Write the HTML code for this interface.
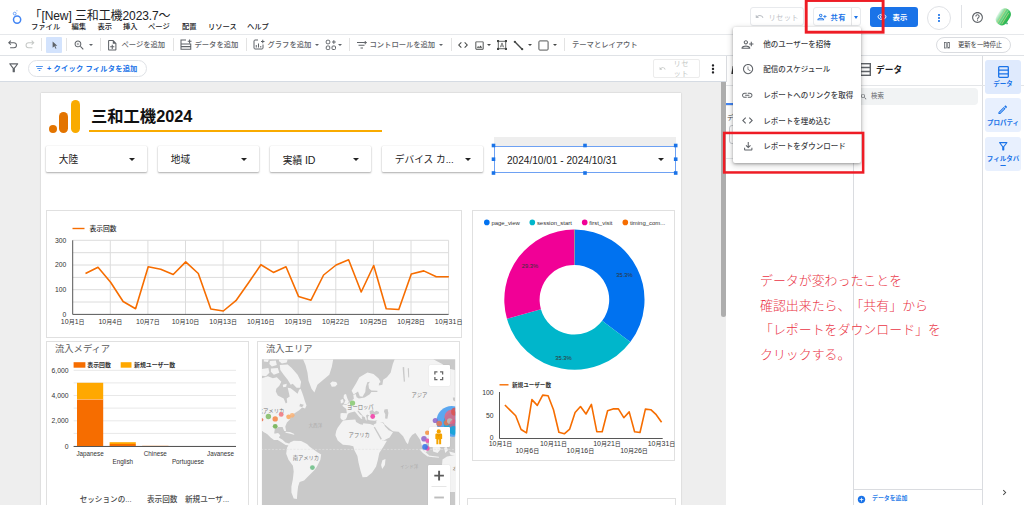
<!DOCTYPE html>
<html lang="ja">
<head>
<meta charset="utf-8">
<title>Looker Studio</title>
<style>
*{box-sizing:border-box;margin:0;padding:0}
html,body{width:1024px;height:505px;overflow:hidden;background:#fff}
body{position:relative;font-family:"Liberation Sans","Noto Sans CJK JP",sans-serif;color:#3c4043;font-size:9px}
.abs{position:absolute}
.t{position:absolute;white-space:nowrap;line-height:1}
svg{position:absolute;overflow:visible}
#canvas{left:0;top:82px;width:726px;height:423px;background:#eeeeee}
#page{left:41px;top:93px;width:640px;height:412px;background:#fff;box-shadow:0 0 1.5px rgba(0,0,0,.22)}
.hl{position:absolute;height:1px;background:#dadce0}
.vl{position:absolute;width:1px;background:#dadce0}
.dd{position:absolute;top:146px;width:101px;height:26px;background:#fff;box-shadow:0 1px 2px rgba(0,0,0,.32),0 0 1px rgba(0,0,0,.18);border-radius:1px}
.dd span{position:absolute;left:12.8px;top:9.2px;font-size:9.7px;color:#222;line-height:1;white-space:nowrap}
.dd i{position:absolute;right:12px;top:11.8px;border:3.2px solid transparent;border-top:3.4px solid #222;border-bottom:0}
.box{position:absolute;border:1px solid #e0e0e0;background:#fff}
.menu{font-size:7.3px;color:#202124;top:22.9px;font-weight:500}
.tb{font-size:7.3px;color:#5f6368;top:40.7px;font-weight:500}
.mi{font-size:7.5px;color:#3c4043;left:763.3px;font-weight:500}
.tab{position:absolute;left:985px;width:36px;height:34px;background:#e8f0fe;border-radius:3px}
.tab span{position:absolute;left:0;width:36px;text-align:center;font-size:6.5px;font-weight:700;color:#1a73e8;line-height:1.1;white-space:nowrap}
.ax{font-size:7px;fill:#333;font-family:"Liberation Sans","Noto Sans CJK JP",sans-serif}
</style>
</head>
<body>
<!-- ===== header ===== -->
<div id="hdr" class="abs" style="left:0;top:0;width:1024px;height:34px;background:#fff"></div>
<!-- ===== toolbar ===== -->
<div class="hl" style="left:0;top:33.5px;width:1024px;background:#e6e8eb"></div>
<div class="hl" style="left:0;top:55px;width:1024px;background:#dfe2e6"></div>
<!-- ===== filter bar ===== -->
<div class="hl" style="left:0;top:81px;width:726px;background:#d5dbe3"></div>
<!-- ===== canvas ===== -->
<div id="canvas" class="abs"></div>
<div id="page" class="abs"></div>
<!-- scrollbar -->
<div class="abs" style="left:721px;top:82px;width:5px;height:234.5px;background:#adadad;border-radius:0 0 2.5px 2.5px"></div>
<!-- ===== right panels ===== -->
<div class="abs" style="left:726px;top:56px;width:298px;height:449px;background:#fff"></div>
<div class="vl" style="left:726px;top:56px;height:26px"></div>
<div class="vl" style="left:853px;top:56px;height:449px"></div>
<div class="vl" style="left:981.5px;top:56px;height:449px"></div>

<!-- ===== header content ===== -->
<svg style="left:0;top:0" width="40" height="34"><circle cx="17.100" cy="19.550" r="3.600" fill="none" stroke="#4285f4" stroke-width="1.500"/><circle cx="14.700" cy="13.600" r="1.400" fill="none" stroke="#5e97f6" stroke-width=".9"/><circle cx="16.900" cy="10.800" r=".7" fill="#a8c7fa"/></svg>
<div class="t" style="left:29.600px;top:9.900px;font-size:12px;color:#202124;letter-spacing:-.1px">「[New] 三和工機2023.7〜</div>
<div class="t menu" style="left:31px">ファイル</div>
<div class="t menu" style="left:71.5px">編集</div>
<div class="t menu" style="left:97.5px">表示</div>
<div class="t menu" style="left:123px">挿入</div>
<div class="t menu" style="left:148px">ページ</div>
<div class="t menu" style="left:182px">配置</div>
<div class="t menu" style="left:208px">リソース</div>
<div class="t menu" style="left:247px">ヘルプ</div>

<!-- reset button (header) -->
<div class="abs" style="left:750.3px;top:7.3px;width:54px;height:19.2px;border:1px solid #e8eaed;border-radius:3px"></div>
<svg style="left:755px;top:12px" width="9" height="9" viewBox="0 0 24 24"><path fill="#bdc1c6" d="M12.5 8c-2.65 0-5.05.99-6.9 2.6L2 7v9h9l-3.62-3.62c1.39-1.16 3.16-1.88 5.12-1.88 3.54 0 6.55 2.31 7.6 5.5l2.37-.78C21.08 11.03 17.15 8 12.5 8z"/></svg>
<div class="t" style="left:768.500px;top:13.500px;font-size:7.3px;color:#bdc1c6;letter-spacing:.3px">リセット</div>
<!-- share button -->
<div class="abs" style="left:813.2px;top:7.3px;width:48px;height:19.2px;border:1px solid #e8eaed;border-radius:3px;background:#fff"></div>
<div class="vl" style="left:851px;top:8px;height:18px;background:#e4e5e7"></div>
<svg style="left:817px;top:11.5px" width="10" height="10" viewBox="0 0 24 24"><path fill="#1a73e8" d="M13 8c0-2.21-1.79-4-4-4S5 5.790 5 8s1.790 4 4 4 4-1.790 4-4zm-2 0c0 1.100-.9 2-2 2s-2-.9-2-2 .9-2 2-2 2 .9 2 2zM1 18v2h16v-2c0-2.660-5.330-4-8-4s-8 1.340-8 4zm2 0c.2-.71 3.300-2 6-2 2.690 0 5.780 1.280 6 2H3zm17-3v-3h3v-2h-3V7h-2v3h-3v2h3v3h2z"/></svg>
<div class="t" style="left:830.5px;top:13.700px;font-size:7.3px;color:#1a73e8;font-weight:700;letter-spacing:.4px">共有</div>
<div class="abs" style="left:853.5px;top:16px;border:2.6px solid transparent;border-top:3px solid #1a73e8;border-bottom:0"></div>
<!-- view button -->
<div class="abs" style="left:870px;top:7px;width:48px;height:19.5px;background:#1a73e8;border-radius:3px"></div>
<svg style="left:876.5px;top:12px" width="10" height="10" viewBox="0 0 24 24"><path fill="#fff" d="M12 6c3.790 0 7.170 2.130 8.820 5.500C19.170 14.870 15.790 17 12 17s-7.170-2.130-8.820-5.500C4.830 8.130 8.210 6 12 6m0-2C7 4 2.730 7.110 1 11.500 2.730 15.890 7 19 12 19s9.270-3.110 11-7.500C21.270 7.110 17 4 12 4zm0 5c1.380 0 2.500 1.120 2.500 2.500S13.380 14 12 14s-2.500-1.120-2.500-2.500S10.620 9 12 9m0-2c-2.480 0-4.500 2.020-4.500 4.500S9.520 16 12 16s4.500-2.020 4.500-4.500S14.480 7 12 7z"/></svg>
<div class="t" style="left:892.500px;top:13.500px;font-size:7.3px;color:#fff;font-weight:700;letter-spacing:.3px">表示</div>
<!-- more -->
<div class="abs" style="left:927px;top:5.5px;width:24px;height:24px;border:1px solid #e0e2e6;border-radius:50%"></div>
<svg style="left:933px;top:11.5px" width="12" height="12" viewBox="0 0 24 24"><path fill="#1a73e8" d="M12 8c1.100 0 2-.9 2-2s-.9-2-2-2-2 .9-2 2 .9 2 2 2zm0 2c-1.100 0-2 .9-2 2s.9 2 2 2 2-.9 2-2-.9-2-2-2zm0 6c-1.100 0-2 .9-2 2s.9 2 2 2 2-.9 2-2-.9-2-2-2z"/></svg>
<div class="vl" style="left:960.5px;top:5px;height:23px;background:#e0e2e6"></div>
<svg style="left:970.700px;top:10.500px" width="13" height="13" viewBox="0 0 24 24"><path fill="#5f6368" d="M11 18h2v-2h-2v2zm1-16C6.480 2 2 6.480 2 12s4.480 10 10 10 10-4.480 10-10S17.520 2 12 2zm0 18c-4.410 0-8-3.590-8-8s3.590-8 8-8 8 3.590 8 8-3.590 8-8 8zm0-14c-2.210 0-4 1.790-4 4h2c0-1.100.9-2 2-2s2 .9 2 2c0 2-3 1.750-3 5h2c0-2.250 3-2.500 3-5 0-2.210-1.790-4-4-4z"/></svg>
<!-- avatar -->
<svg style="left:0;top:0" width="1024" height="36"><defs><linearGradient id="lg" x1="0" y1="0" x2="1" y2="0"><stop offset="0" stop-color="#e4f8e9"/><stop offset=".3" stop-color="#7fdb9a"/><stop offset=".7" stop-color="#3cc463"/><stop offset="1" stop-color="#25b14a"/></linearGradient></defs><g transform="translate(1003.300,16.800) rotate(32)"><rect x="-6" y="-8.800" width="12" height="17.600" rx="5.500" fill="url(#lg)"/><path d="M-1.800,-8.500V8.500M2.600,-6V7" stroke="#d7d28a" stroke-width=".7" fill="none" opacity=".9"/><path d="M.6,-8V8" stroke="#b9e6a6" stroke-width=".5" fill="none"/></g><circle cx="1007" cy="23.400" r=".9" fill="#3fae7a"/></svg>

<!-- ===== toolbar content ===== -->
<svg style="left:8px;top:40.300px" width="9.500" height="9.500" viewBox="0 0 20 20"><path fill="none" stroke="#5f6368" stroke-width="2.200" d="M6,1.200L1.600,5.600L6,10M1.600,5.600H12.500A5.300,5.300 0 0 1 12.500,16.200H4.500"/></svg>
<svg style="left:25px;top:40.300px" width="9.500" height="9.500" viewBox="0 0 20 20"><path fill="none" stroke="#c4c7c5" stroke-width="2.200" d="M14,1.200L18.400,5.600L14,10M18.400,5.600H7.500A5.300,5.300 0 0 0 7.500,16.200H15.500"/></svg>
<div class="vl" style="left:41px;top:38px;height:13px;background:#e3e3e3"></div>
<div class="abs" style="left:46.200px;top:36.900px;width:15.800px;height:15.800px;background:#d3e3fd;border-radius:1px"></div>
<svg style="left:50.800px;top:41px" width="7.800" height="7.800" viewBox="0 0 24 24"><path fill="#5f6368" d="M5 1.500l14.500 12.800-6.400.6 3.700 7.900-2.700 1.200-3.600-8L5 20.500z"/></svg>
<div class="vl" style="left:66px;top:38px;height:13px;background:#e3e3e3"></div>
<svg style="left:73px;top:38.500px" width="12.500" height="12.500" viewBox="0 0 24 24"><path fill="#5f6368" d="M15.500 14h-.79l-.28-.27C15.410 12.590 16 11.110 16 9.500 16 5.910 13.090 3 9.500 3S3 5.910 3 9.500 5.910 16 9.500 16c1.610 0 3.090-.59 4.230-1.570l.27.28v.79l5 4.990L20.490 19l-4.990-5zm-6 0C7.010 14 5 11.990 5 9.500S7.010 5 9.500 5 14 7.010 14 9.500 11.990 14 9.500 14zm2.500-4h-2v2H9v-2H7V9h2V7h1v2h2v1z"/></svg>
<i class="abs" style="left:88.500px;top:44px;border:2.300px solid transparent;border-top:2.600px solid #5f6368;border-bottom:0"></i>
<div class="vl" style="left:100px;top:38px;height:13px;background:#e3e3e3"></div>
<svg style="left:106.200px;top:38.500px" width="12.500" height="12.500" viewBox="0 0 24 24"><path fill="#5f6368" d="M13 11h-2v3H8v2h3v3h2v-3h3v-2h-3zm1-9H6c-1.100 0-2 .9-2 2v16c0 1.100.89 2 1.990 2H18c1.100 0 2-.9 2-2V8l-6-6zm4 18H6V4h7v5h5v11z"/></svg>
<div class="t tb" style="left:121.500px">ページを追加</div>
<div class="vl" style="left:173px;top:38px;height:13px;background:#e3e3e3"></div>
<svg style="left:179.500px;top:39px" width="12" height="11" viewBox="0 0 24 22"><path fill="none" stroke="#5f6368" stroke-width="2.100" d="M12 2H2v18.500h19.500V10H2M2 15.200h19.500M15.500 4.500h7.500M19.200 .8v7.500"/></svg>
<div class="t tb" style="left:194.500px">データを追加</div>
<div class="vl" style="left:246px;top:38px;height:13px;background:#e3e3e3"></div>
<svg style="left:253px;top:39px" width="12" height="11" viewBox="0 0 24 22"><path fill="none" stroke="#5f6368" stroke-width="2" d="M10 2H4c-1.100 0-2 .9-2 2v14c0 1.100.9 2 2 2h14c1.100 0 2-.9 2-2v-7M6.500 17v-5M11 17V9M15.500 17v-3M16 5h7M19.500 1.500v7"/></svg>
<div class="t tb" style="left:267.500px">グラフを追加</div>
<i class="abs" style="left:314.500px;top:44px;border:2.300px solid transparent;border-top:2.600px solid #5f6368;border-bottom:0"></i>
<svg style="left:325px;top:39px" width="12" height="12" viewBox="0 0 24 24"><g fill="none" stroke="#5f6368" stroke-width="2"><rect x="2.500" y="2.500" width="7" height="7" rx="2"/><rect x="2.500" y="14" width="7" height="7" rx="2"/><rect x="14" y="14" width="7" height="7" rx="2"/><path d="M14 6h7.500M17.700 2.300v7.500"/></g></svg>
<i class="abs" style="left:338px;top:44px;border:2.300px solid transparent;border-top:2.600px solid #5f6368;border-bottom:0"></i>
<div class="vl" style="left:348.500px;top:38px;height:13px;background:#e3e3e3"></div>
<svg style="left:355.500px;top:39.500px" width="12" height="11" viewBox="0 0 24 22"><path fill="none" stroke="#5f6368" stroke-width="2" d="M2 5h15M5 10.500h12M9 16h5M11.500 20h0M18.500 2v6.500M15.300 5.200h6.500"/></svg>
<div class="t tb" style="left:369.500px">コントロールを追加</div>
<i class="abs" style="left:439px;top:44px;border:2.300px solid transparent;border-top:2.600px solid #5f6368;border-bottom:0"></i>
<div class="vl" style="left:450.500px;top:38px;height:13px;background:#e3e3e3"></div>
<svg style="left:457px;top:39px" width="12" height="12" viewBox="0 0 24 24"><path fill="#444746" d="M9.400 16.600L4.800 12l4.600-4.600L8 6l-6 6 6 6 1.400-1.400zm5.200 0l4.600-4.600-4.600-4.600L16 6l6 6-6 6-1.400-1.400z"/></svg>
<svg style="left:474px;top:39.500px" width="11" height="11" viewBox="0 0 24 24"><path fill="#444746" d="M19 5v14H5V5h14m0-2H5c-1.100 0-2 .9-2 2v14c0 1.100.9 2 2 2h14c1.100 0 2-.9 2-2V5c0-1.100-.9-2-2-2zm-4.860 8.860l-3 3.870L9 13.140 6 17h12l-3.860-5.140z"/></svg>
<i class="abs" style="left:486.500px;top:44px;border:2.300px solid transparent;border-top:2.600px solid #444746;border-bottom:0"></i>
<svg style="left:496.500px;top:40px" width="10" height="10" viewBox="0 0 24 24"><g fill="none" stroke="#444746" stroke-width="2"><rect x="3" y="3" width="18" height="18"/><path d="M8 17.500L12 7l4 10.500M9.300 14.500h5.400" stroke-width="1.600"/></g><g fill="#444746"><rect x="0" y="0" width="5" height="5"/><rect x="19" y="0" width="5" height="5"/><rect x="0" y="19" width="5" height="5"/><rect x="19" y="19" width="5" height="5"/></g></svg>
<svg style="left:513px;top:39.500px" width="11" height="11" viewBox="0 0 24 24"><path stroke="#444746" stroke-width="3" d="M4 4l16 16"/><circle cx="4" cy="4" r="2.500" fill="#444746"/><circle cx="20" cy="20" r="2.500" fill="#444746"/></svg>
<i class="abs" style="left:528px;top:44px;border:2.300px solid transparent;border-top:2.600px solid #444746;border-bottom:0"></i>
<svg style="left:537.500px;top:39.500px" width="11" height="11" viewBox="0 0 24 24"><rect x="2" y="2" width="20" height="20" rx="2" fill="none" stroke="#444746" stroke-width="2"/></svg>
<i class="abs" style="left:552.500px;top:44px;border:2.300px solid transparent;border-top:2.600px solid #444746;border-bottom:0"></i>
<div class="vl" style="left:563.500px;top:38px;height:13px;background:#e3e3e3"></div>
<div class="t tb" style="left:572px;color:#5f6368">テーマとレイアウト</div>
<!-- pause updates pill -->
<div class="abs" style="left:935.500px;top:36.500px;width:75.500px;height:16.500px;border:1px solid #dadce0;border-radius:9px;background:#fff"></div>
<svg style="left:944px;top:41.500px" width="6" height="6.500" viewBox="0 0 12 13"><g fill="none" stroke="#5f6368" stroke-width="1.500"><rect x="1" y="1" width="3.500" height="11"/><rect x="7.500" y="1" width="3.500" height="11"/></g></svg>
<div class="t" style="left:958px;top:41.500px;font-size:6.300px;color:#3c4043;font-weight:400">更新を一時停止</div>

<!-- ===== filter bar content ===== -->
<svg style="left:6.700px;top:60.800px" width="13.500" height="13.500" viewBox="0 0 24 24"><path fill="#5f6368" d="M7 6h10l-5.010 6.300L7 6zm-2.750-.39C6.270 8.200 10 13 10 13v6c0 .55.45 1 1 1h2c.55 0 1-.45 1-1v-6s3.720-4.800 5.740-7.390c.51-.66.040-1.610-.79-1.610H5.040c-.83 0-1.300.95-.79 1.610z"/></svg>
<div class="abs" style="left:28px;top:59.500px;width:118.500px;height:17px;border:1px solid #dfe2e6;border-radius:9px;background:#fff"></div>
<svg style="left:34.500px;top:64px" width="9" height="9" viewBox="0 0 24 24"><path fill="#1a73e8" d="M10 18h4v-2h-4v2zM3 6v2h18V6H3zm3 7h12v-2H6v2z"/></svg>
<div class="t" style="left:47px;top:64.500px;font-size:7.300px;color:#1a73e8;font-weight:700;letter-spacing:.15px">+ クイック フィルタを追加</div>
<!-- reset (filter bar) -->
<div class="abs" style="left:652.500px;top:59px;width:47px;height:18.500px;border:1px solid #ececec;border-radius:2px"></div>
<svg style="left:658.500px;top:65px" width="7" height="7" viewBox="0 0 24 24"><path fill="#c4c7c5" d="M12.500 8c-2.650 0-5.050.99-6.900 2.600L2 7v9h9l-3.620-3.620c1.390-1.160 3.160-1.880 5.120-1.880 3.540 0 6.550 2.310 7.600 5.500l2.370-.78C21.080 11.030 17.150 8 12.500 8z"/></svg>
<div class="t" style="left:673.500px;top:59.300px;font-size:7.300px;color:#c4c7c5;line-height:1.300;letter-spacing:.5px;text-align:center">リセ<br>ット</div>
<svg style="left:705.500px;top:61.500px" width="14" height="14" viewBox="0 0 24 24"><path fill="#202124" d="M12 8c1.100 0 2-.9 2-2s-.9-2-2-2-2 .9-2 2 .9 2 2 2zm0 2c-1.100 0-2 .9-2 2s.9 2 2 2 2-.9 2-2-.9-2-2-2zm0 6c-1.100 0-2 .9-2 2s.9 2 2 2 2-.9 2-2-.9-2-2-2z"/></svg>

<!-- ===== report page content ===== -->
<div class="abs" style="left:49px;top:125px;width:8px;height:8px;border-radius:50%;background:#e37400"></div>
<div class="abs" style="left:59.300px;top:112px;width:9px;height:21px;border-radius:5px;background:#e37400"></div>
<div class="abs" style="left:71px;top:99.500px;width:8.700px;height:33.500px;border-radius:5px;background:#f9ab00"></div>
<div class="t" style="left:91px;top:108px;font-size:16.300px;font-weight:700;color:#111;letter-spacing:0">三和工機2024</div>
<div class="abs" style="left:88.500px;top:130px;width:293.500px;height:2px;background:#f9ab00"></div>
<div class="dd" style="left:46px"><span>大陸</span><i></i></div>
<div class="dd" style="left:158px"><span>地域</span><i></i></div>
<div class="dd" style="left:270px"><span>実績 <b style="font-weight:400;font-size:10.6px">ID</b></span><i></i></div>
<div class="dd" style="left:382px"><span>デバイス カ...</span><i></i></div>
<!-- date range (selected) -->
<div class="abs" style="left:493.500px;top:137px;width:182px;height:9px;background:#eeeeee"></div>
<div class="abs" style="left:493.500px;top:145.500px;width:182.300px;height:27.500px;border:1px solid #6ea1f3;background:#fff"></div>
<div class="t" style="left:507px;top:155.600px;font-size:10.100px;color:#222">2024/10/01 - 2024/10/31</div>
<i class="abs" style="left:657.500px;top:158px;border:3px solid transparent;border-top:3.300px solid #222;border-bottom:0"></i>
<svg style="left:0;top:0" width="1024" height="505"><g fill="#1a73e8"><rect x="491.700" y="143.700" width="3.600" height="3.600"/><rect x="583.200" y="143.700" width="3.600" height="3.600"/><rect x="673.900" y="143.700" width="3.600" height="3.600"/><rect x="491.700" y="157.400" width="3.600" height="3.600"/><rect x="673.900" y="157.400" width="3.600" height="3.600"/><rect x="491.700" y="171.200" width="3.600" height="3.600"/><rect x="583.200" y="171.200" width="3.600" height="3.600"/><rect x="673.900" y="171.200" width="3.600" height="3.600"/></g></svg>

<!-- ===== chart 1: line ===== -->
<div class="box" style="left:45.5px;top:210px;width:416px;height:127.7px"></div>
<svg style="left:0;top:0" width="1024" height="505">
<path d="M72.7,240.3H448.6M72.7,252.7H448.6M72.7,265.0H448.6M72.7,277.4H448.6M72.7,289.7H448.6M72.7,302.0H448.6M110.3,240.3V314.4M147.9,240.3V314.4M185.5,240.3V314.4M223.1,240.3V314.4M260.7,240.3V314.4M298.2,240.3V314.4M335.8,240.3V314.4M373.4,240.3V314.4M411.0,240.3V314.4M448.6,240.3V314.4" stroke="#dcdcdc" stroke-width="1" fill="none"/>
<path d="M72.7,240.3V314.4H448.6" stroke="#444" stroke-width=".9" fill="none"/>
<polyline points="85.5,273.5 98.0,267.3 110.6,282.2 123.1,301.5 135.6,308.7 148.2,266.8 160.7,269.3 173.2,274.5 185.7,261.9 198.3,273.5 210.8,309.0 223.3,311.0 235.9,300.7 248.4,283.0 260.9,264.7 273.4,272.4 286.0,266.8 298.5,296.4 311.0,300.2 323.6,275.0 336.1,265.0 348.6,259.8 361.2,292.0 373.7,265.5 386.2,308.7 398.8,309.5 411.3,274.0 423.8,270.9 436.3,276.8 448.9,276.8" fill="none" stroke="#f66d00" stroke-width="1.6" stroke-linejoin="round"/>
<path d="M72.5,228.5H84.5" stroke="#f66d00" stroke-width="1.4"/>
<text x="89.4" y="231" class="ax" style="font-size:6.8px;font-weight:500" fill="#222">表示回数</text>
<text x="66.3" y="242.7" text-anchor="end" class="ax" style="font-size:6.8px">300</text>
<text x="66.3" y="267.4" text-anchor="end" class="ax" style="font-size:6.8px">200</text>
<text x="66.3" y="292.1" text-anchor="end" class="ax" style="font-size:6.8px">100</text>
<text x="66.3" y="316.8" text-anchor="end" class="ax" style="font-size:6.8px">0</text>
<text x="72.7" y="324" text-anchor="middle" class="ax" style="font-size:6px"><tspan font-size="7">10</tspan>月<tspan font-size="7">1</tspan>日</text>
<text x="110.3" y="324" text-anchor="middle" class="ax" style="font-size:6px"><tspan font-size="7">10</tspan>月<tspan font-size="7">4</tspan>日</text>
<text x="147.9" y="324" text-anchor="middle" class="ax" style="font-size:6px"><tspan font-size="7">10</tspan>月<tspan font-size="7">7</tspan>日</text>
<text x="185.5" y="324" text-anchor="middle" class="ax" style="font-size:6px"><tspan font-size="7">10</tspan>月<tspan font-size="7">10</tspan>日</text>
<text x="223.1" y="324" text-anchor="middle" class="ax" style="font-size:6px"><tspan font-size="7">10</tspan>月<tspan font-size="7">13</tspan>日</text>
<text x="260.7" y="324" text-anchor="middle" class="ax" style="font-size:6px"><tspan font-size="7">10</tspan>月<tspan font-size="7">16</tspan>日</text>
<text x="298.2" y="324" text-anchor="middle" class="ax" style="font-size:6px"><tspan font-size="7">10</tspan>月<tspan font-size="7">19</tspan>日</text>
<text x="335.8" y="324" text-anchor="middle" class="ax" style="font-size:6px"><tspan font-size="7">10</tspan>月<tspan font-size="7">22</tspan>日</text>
<text x="373.4" y="324" text-anchor="middle" class="ax" style="font-size:6px"><tspan font-size="7">10</tspan>月<tspan font-size="7">25</tspan>日</text>
<text x="411.0" y="324" text-anchor="middle" class="ax" style="font-size:6px"><tspan font-size="7">10</tspan>月<tspan font-size="7">28</tspan>日</text>
<text x="448.6" y="324" text-anchor="middle" class="ax" style="font-size:6px"><tspan font-size="7">10</tspan>月<tspan font-size="7">31</tspan>日</text>
</svg>

<!-- ===== chart 2: donut + small line ===== -->
<div class="box" style="left:472px;top:210px;width:203px;height:250.5px"></div>
<svg style="left:0;top:0" width="1024" height="505">
<path d="M574.40,229.60A70.1,70.1 0 0 1 630.33,341.97L602.16,320.68A34.8,34.8 0 0 0 574.40,264.90Z" fill="#0072f0"/>
<path d="M630.33,341.97A70.1,70.1 0 0 1 506.96,318.83L540.92,309.20A34.8,34.8 0 0 0 602.16,320.68Z" fill="#00b6cb"/>
<path d="M506.96,318.83A70.1,70.1 0 0 1 573.96,229.60L574.18,264.90A34.8,34.8 0 0 0 540.92,309.20Z" fill="#f10096"/>
<path d="M573.96,229.60A70.1,70.1 0 0 1 574.40,229.60L574.40,264.90A34.8,34.8 0 0 0 574.18,264.90Z" fill="#f66d00"/>
<text x="624.5" y="276.7" text-anchor="middle" class="ax" style="font-size:5.8px" fill="#1a1a1a">35.3%</text>
<text x="563.5" y="359.7" text-anchor="middle" class="ax" style="font-size:5.8px" fill="#1a1a1a">35.3%</text>
<text x="530.0" y="268.4" text-anchor="middle" class="ax" style="font-size:5.8px" fill="#1a1a1a">29.3%</text>
<circle cx="486.8" cy="222.4" r="2.8" fill="#0072f0"/>
<text x="491.4" y="224.5" class="ax" style="font-size:5.95px" fill="#222">page_view</text>
<circle cx="532.3" cy="222.4" r="2.8" fill="#00b6cb"/>
<text x="536.9" y="224.5" class="ax" style="font-size:5.95px" fill="#222">session_start</text>
<circle cx="584.7" cy="222.4" r="2.8" fill="#f10096"/>
<text x="589.3" y="224.5" class="ax" style="font-size:5.95px" fill="#222">first_visit</text>
<circle cx="625.3" cy="222.4" r="2.8" fill="#f66d00"/>
<text x="629.9" y="224.5" class="ax" style="font-size:5.95px" fill="#222">timing_com...</text>
<path d="M499.5,392V438.5H662.7" stroke="#444" stroke-width=".9" fill="none"/>
<polyline points="504.9,405.0 510.3,410.4 515.7,415.8 521.1,429.5 526.5,432.9 531.9,399.6 537.3,405.4 542.7,395.1 548.1,395.8 553.5,409.7 558.9,432.3 564.3,433.8 569.7,429.1 575.1,412.5 580.5,406.5 586.0,414.0 591.4,404.4 596.8,431.7 602.2,431.7 607.6,410.8 613.0,408.9 618.4,408.9 623.8,417.7 629.2,411.9 634.6,431.7 640.0,432.5 645.4,409.1 650.8,409.7 656.2,414.7 661.6,422.2" fill="none" stroke="#f66d00" stroke-width="1.6" stroke-linejoin="round"/>
<path d="M499.5,384.8H508.5" stroke="#f66d00" stroke-width="1.4"/>
<text x="512" y="387" class="ax" style="font-size:5.6px;font-weight:700" fill="#222">新規ユーザー数</text>
<text x="493.5" y="394.7" text-anchor="end" class="ax" style="font-size:6.8px">100</text>
<text x="493.5" y="417.8" text-anchor="end" class="ax" style="font-size:6.8px">50</text>
<text x="493.5" y="440.4" text-anchor="end" class="ax" style="font-size:6.8px">0</text>
<text x="500.5" y="445.6" text-anchor="middle" class="ax" style="font-size:6px"><tspan font-size="7">10</tspan>月<tspan font-size="7">1</tspan>日</text>
<text x="553.5" y="445.6" text-anchor="middle" class="ax" style="font-size:6px"><tspan font-size="7">10</tspan>月<tspan font-size="7">11</tspan>日</text>
<text x="607.0" y="445.6" text-anchor="middle" class="ax" style="font-size:6px"><tspan font-size="7">10</tspan>月<tspan font-size="7">21</tspan>日</text>
<text x="661.5" y="445.6" text-anchor="middle" class="ax" style="font-size:6px"><tspan font-size="7">10</tspan>月<tspan font-size="7">31</tspan>日</text>
<text x="527.3" y="453" text-anchor="middle" class="ax" style="font-size:6px"><tspan font-size="7">10</tspan>月<tspan font-size="7">6</tspan>日</text>
<text x="580.4" y="453" text-anchor="middle" class="ax" style="font-size:6px"><tspan font-size="7">10</tspan>月<tspan font-size="7">16</tspan>日</text>
<text x="634.0" y="453" text-anchor="middle" class="ax" style="font-size:6px"><tspan font-size="7">10</tspan>月<tspan font-size="7">26</tspan>日</text>
</svg>
<div class="box" style="left:467px;top:498px;width:208.500px;height:20px"></div>

<!-- ===== chart 3: bar ===== -->
<div class="box" style="left:45.5px;top:341px;width:203.5px;height:180px"></div>
<div class="t" style="left:55px;top:344.7px;font-size:9.3px;color:#5a5a5a;font-weight:400">流入メディア</div>
<svg style="left:0;top:0" width="1024" height="505">
<path d="M73.6,446.0H236M73.6,433.4H236M73.6,420.8H236M73.6,408.1H236M73.6,395.5H236M73.6,382.9H236M73.6,370.3H236" stroke="#e8e8e8" stroke-width="1" fill="none"/>
<rect x="77" y="399.300" width="26.2" height="46.700" fill="#f66d00"/>
<rect x="77" y="382.8" width="26.2" height="16.2" fill="#ffa800"/><rect x="77" y="399" width="26.2" height=".7" fill="#ffc070"/><rect x="142.2" y="445.500" width="26.200" height=".8" fill="#f66d00" fill-opacity=".35"/>
<rect x="109.6" y="444" width="26.2" height="2" fill="#f66d00"/>
<rect x="109.6" y="442.2" width="26.2" height="1.8" fill="#ffa800"/>
<path d="M73.6,446.5H236" stroke="#444" stroke-width=".9"/>
<rect x="73.6" y="362.2" width="11.8" height="5.5" fill="#f66d00"/>
<text x="87.3" y="367" class="ax" style="font-size:5.9px;font-weight:700" fill="#222">表示回数</text>
<rect x="120.7" y="362.2" width="10.8" height="5.5" fill="#ffa800"/>
<text x="134" y="367" class="ax" style="font-size:5.9px;font-weight:700" fill="#222">新規ユーザー数</text>
<text x="68.6" y="372.5" text-anchor="end" class="ax" style="font-size:6.8px">6,000</text>
<text x="68.6" y="397.7" text-anchor="end" class="ax" style="font-size:6.8px">4,000</text>
<text x="68.6" y="423.0" text-anchor="end" class="ax" style="font-size:6.8px">2,000</text>
<text x="68.6" y="449.4" text-anchor="end" class="ax" style="font-size:6.8px">0</text>
<text x="90.1" y="455.6" text-anchor="middle" class="ax" style="font-size:6.3px">Japanese</text>
<text x="122.8" y="464.2" text-anchor="middle" class="ax" style="font-size:6.3px">English</text>
<text x="155.3" y="455.6" text-anchor="middle" class="ax" style="font-size:6.3px">Chinese</text>
<text x="188.0" y="464.2" text-anchor="middle" class="ax" style="font-size:6.3px">Portuguese</text>
<text x="220.5" y="455.6" text-anchor="middle" class="ax" style="font-size:6.3px">Javanese</text>
</svg>
<div class="t" style="left:79.7px;top:495.500px;font-size:7.6px;color:#4a4a4a;font-weight:500">セッションの...</div>
<div class="t" style="left:147px;top:495.500px;font-size:7.6px;color:#4a4a4a;font-weight:500">表示回数</div>
<div class="t" style="left:185px;top:495.500px;font-size:7.6px;color:#4a4a4a;font-weight:500">新規ユーザ...</div>

<!-- ===== chart 4: map ===== -->
<div class="box" style="left:257px;top:341px;width:202.500px;height:180px"></div>
<div class="t" style="left:266px;top:344.700px;font-size:9.300px;color:#5a5a5a;font-weight:400">流入エリア</div>
<svg style="left:0;top:0" width="1024" height="505">
<defs><clipPath id="mapclip"><rect x="261.900" y="359.200" width="193.300" height="146"/></clipPath></defs>
<g clip-path="url(#mapclip)">
<rect x="261" y="359" width="195" height="147" fill="#c9c9c9"/>
<g fill="#f3f3f3">
<path d="M262.0,378.3L267.9,376.3L272.9,378.3L276.8,377.3L281.3,381.7L279.3,385.7L276.3,388.7L275.8,391.6L277.8,395.6L283.7,398.6L285.7,403.5L287.2,402.5L286.7,398.6L289.7,396.6L287.7,387.7L290.7,388.2L293.6,390.6L297.6,393.8L299.1,389.7L300.6,388.7L302.1,392.6L303.5,396.6L305.0,401.5L306.5,405.5L305.1,408.5L302.1,407.5L299.2,410.2L295.0,413.1L291.3,415.9L289.6,419.8L286.9,422.6L285.3,426.5L286.1,431.1L284.2,431.1L282.6,427.0L278.2,427.0L274.8,429.0L274.2,433.2L276.2,437.1L279.0,440.0L274.0,440.0L270.6,437.4L266.4,433.2L261.7,429.9Z"/>
<path d="M279.8,364.9L287.7,364.4L291.7,367.9L297.6,374.8L301.1,381.7L300.1,387.7L296.6,387.7L292.7,383.7L290.7,384.7L287.7,379.8L283.7,374.8L280.3,369.9Z"/>
<path d="M269.9,360.9L275.8,360.4L276.8,364.9L271.9,366.4L269.4,363.9Z"/>
<path d="M262.0,368.9L268.4,367.9L269.4,372.8L265.9,376.3L262.0,375.8Z"/>
<path d="M270.9,368.4L277.8,367.9L279.3,372.8L273.8,374.8L270.9,371.8Z"/>
<path d="M279.3,359.2L287.7,359.2L286.7,362.4L281.8,363.4L278.8,360.9Z"/>
<path d="M263.9,359.2L268.9,359.2L267.9,361.9L263.9,361.4Z"/>
<path d="M282.8,384.7L286.7,383.7L286.2,386.7L283.2,387.2Z"/>
<path d="M303.0,359.2L333.2,359.2L331.8,366.9L329.3,374.8L323.3,379.8L317.4,384.7L314.4,392.4L311.5,388.7L308.5,380.7L307.5,372.8L305.5,364.9Z"/>
<path d="M330.1,383.2L332.3,381.5L336.2,381.9L337.4,384.2L335.2,386.5L331.8,386.7Z"/>
<path d="M261.0,430.0L272.1,430.0L274.3,433.7L278.1,433.0L280.3,435.2L278.8,437.4L282.5,439.7L285.5,442.6L289.9,443.7L289.5,445.5L285.5,444.9L281.8,442.6L277.3,439.7L272.9,436.7L268.4,434.5L263.9,432.2Z"/>
<path d="M285.5,431.8L289.9,432.1L294.4,433.9L294.0,434.8L289.2,433.6L285.5,432.7Z"/>
<path d="M289.9,442.6L293.7,440.7L301.1,441.1L307.0,444.1L310.0,447.1L317.4,452.3L321.2,454.5L320.4,459.7L316.7,467.1L314.5,470.1L310.0,474.6L307.0,477.5L304.1,480.5L299.6,482.0L298.1,486.5L297.4,492.4L296.9,499.1L293.7,498.4L291.4,492.4L291.4,486.5L292.9,479.0L293.7,471.6L292.9,465.7L288.5,459.7L286.2,453.8L287.0,447.8Z"/>
<path d="M343.1,420.5L348.2,419.9L355.3,419.5L356.1,421.9L360.1,424.3L362.9,424.7L363.2,423.2L370.0,423.9L374.0,425.6L376.1,429.1L379.3,435.3L382.4,440.5L386.9,440.7L383.4,446.8L379.3,453.0L377.8,460.3L376.1,466.5L372.0,472.8L366.8,476.9L362.6,477.3L360.5,470.7L358.5,462.4L357.4,456.1L354.3,449.9L353.3,446.2L349.1,445.3L342.9,444.7L337.7,440.5L335.4,435.3L336.2,431.0L337.5,428.0L339.1,425.8L341.1,423.1Z"/>
<path d="M382.4,460.3L385.5,459.0L384.9,464.9L382.2,469.0L381.1,464.9Z"/>
<path d="M373.7,424.4L377.3,422.7L382.5,422.7L385.1,425.3L389.6,430.4L393.0,432.3L389.6,437.5L383.1,440.8L380.9,439.4L377.3,433.0L374.5,427.8Z"/>
<path d="M340.4,417.9L340.5,413.6L341.9,413.1L346.8,413.2L346.3,409.0L342.2,405.8L343.5,404.6L346.0,404.9L348.5,403.6L351.8,400.5L353.9,398.8L353.3,395.1L355.7,393.9L356.6,397.3L358.9,398.5L364.6,397.5L369.8,394.2L371.3,392.1L377.4,392.0L377.4,390.7L371.4,390.4L369.0,388.4L368.4,384.1L369.9,381.7L367.3,382.3L365.8,386.9L365.3,392.1L362.5,396.8L359.8,396.3L358.0,391.6L353.6,394.5L351.6,390.7L355.7,384.0L359.4,377.3L367.5,372.5L373.5,374.0L378.7,378.5L380.6,382.0L379.1,383.2L378.8,385.6L382.4,384.7L383.2,379.7L386.9,377.3L390.6,372.8L392.8,363.9L394.6,359.5L394.7,359.2L433.3,359.2L442.2,363.9L448.2,368.4L454.8,369.9L454.8,395.1L455.0,397.6L453.1,400.1L455.0,401.4L455.0,433.6L450.5,437.5L441.5,437.5L433.8,433.6L434.4,438.8L432.5,442.6L429.3,441.3L427.3,438.1L426.0,441.3L426.7,446.5L427.3,451.0L425.4,452.3L423.2,449.1L421.5,444.5L420.2,440.0L417.7,436.2L415.4,433.0L415.3,433.0L412.1,434.9L409.5,438.8L407.9,444.2L406.3,442.6L403.1,436.2L398.6,431.7L392.8,431.3L389.6,428.7L385.1,424.9L383.1,422.3L376.3,423.8L376.3,421.0L377.5,420.2L374.3,420.7L369.6,420.2L367.8,419.4L368.0,416.6L369.6,415.4L367.2,414.6L366.0,415.8L366.8,418.6L366.6,420.7L365.5,419.4L364.8,417.0L363.7,416.7L361.3,414.0L358.5,410.8L357.3,410.8L357.7,411.6L360.1,414.4L362.9,416.3L361.7,416.7L362.3,418.5L361.3,419.1L358.5,415.9L355.7,412.4L354.6,411.4L353.8,411.8L350.6,412.4L348.6,413.2L347.4,414.8L347.0,417.1L345.8,419.3L343.1,420.2L341.5,419.5Z"/>
<path d="M343.9,394.8L346.0,393.9L347.2,398.1L348.9,401.8L347.2,404.3L343.9,404.0L345.4,400.3L343.6,398.1Z"/>
<path d="M340.5,399.9L343.0,399.0L343.6,402.3L340.9,403.4Z"/>
<path d="M420.6,449.1L422.8,449.7L429.3,455.5L428.0,456.8L422.8,452.9L420.4,450.3Z"/>
<path d="M432.5,445.8L438.3,444.5L440.8,449.1L437.6,452.9L433.1,451.6Z"/>
<path d="M428.6,455.5L438.9,456.8L438.9,457.8L428.6,456.8Z"/>
<path d="M444.1,447.8L446.6,446.5L447.9,450.3L445.3,452.9Z"/>
<path d="M449.2,451.6L455.0,452.9L455.0,455.5L450.5,454.8Z"/>
<path d="M442.5,459.5L447.0,456.5L455.2,455.0L455.2,492.0L446.0,492.0L441.5,470.0Z"/>
</g>
<g fill="#c9c9c9">
<path d="M300.1,403.8L303.8,404.8L302.1,407.2L299.4,406.3Z"/>
<path d="M402.6,367.2L404.1,366.9L405.0,381.4L403.8,381.7Z"/>
<path d="M407.7,368.4L408.9,368.1L409.2,377.3L408.3,377.6Z"/>
<path d="M369.6,411.1L372.8,410.1L374.3,411.9L376.3,410.7L379.1,411.9L378.5,414.1L374.3,414.9L370.0,414.3Z"/>
<path d="M384.4,409.4L387.6,408.9L388.4,413.0L387.4,418.8L385.1,418.4L385.3,414.3L384.0,411.7Z"/>
<path d="M373.7,427.2L375.0,426.9L381.8,438.8L380.7,439.8Z"/>
<path d="M384.2,425.6L385.3,425.1L390.0,429.5L389.2,430.8Z"/>
<path d="M452.8,397.6L455.0,397.6L455.0,401.2L453.1,400.1Z"/>
</g>
<path d="M261,449.400H456" stroke="#e2e2e2" stroke-width=".6" stroke-dasharray="2.200 1.400" fill="none"/>
<g font-family="Liberation Sans,Noto Sans CJK JP,sans-serif" stroke="#f3f3f3" stroke-width=".5" paint-order="stroke" stroke-opacity=".5">
<text x="257.6" y="412.9" font-size="5.3" fill="#777" letter-spacing=".15">北アメリカ</text>
<text x="292.8" y="460.2" font-size="5.3" fill="#777" >南アメリカ</text>
<text x="347.1" y="409.1" font-size="5.3" fill="#777" >ヨーロッパ</text>
<text x="348.6" y="436.7" font-size="5.3" fill="#777" >アフリカ</text>
<text x="411.6" y="397.2" font-size="5.3" fill="#777" >アジア</text>
</g>
<g font-family="Liberation Sans,Noto Sans CJK JP,sans-serif">
<text x="308.5" y="426.6" font-size="4.6" fill="#aaa" >大西洋</text>
<text x="400.0" y="468.2" font-size="4.6" fill="#aaa" >インド洋</text>
<text x="452.5" y="470" font-size="4.6" fill="#777">オー</text>
</g>
<g>
<circle cx="451.8" cy="421.4" r="15.4" fill="#4a9ff0" fill-opacity="0.9"/>
<circle cx="454.4" cy="422.7" r="10.9" fill="#1fa9d4" fill-opacity="0.85"/>
<circle cx="451.5" cy="416.9" r="7.1" fill="#e56a86" fill-opacity="0.85"/>
<circle cx="455.0" cy="411.7" r="3.9" fill="#d9534f" fill-opacity="0.85"/>
<circle cx="446.6" cy="422.7" r="2.8" fill="#e8734f" fill-opacity="0.85"/>
<circle cx="449.8" cy="421.1" r="2.8" fill="#b9b9b9" fill-opacity="0.95"/>
<circle cx="454.4" cy="424.6" r="5.1" fill="#e25b7a" fill-opacity="0.7"/>
<circle cx="453.7" cy="430.4" r="4.5" fill="#1aa3d9" fill-opacity="0.9"/>
<circle cx="435.3" cy="420.5" r="2.6" fill="#8c63c9" fill-opacity="0.85"/>
<circle cx="439.2" cy="423.6" r="2.8" fill="#e0785a" fill-opacity="0.9"/>
<circle cx="427.3" cy="432.7" r="2.3" fill="#f79646" fill-opacity="0.9"/>
<circle cx="424.0" cy="438.8" r="2.8" fill="#8c63c9" fill-opacity="0.85"/>
<circle cx="427.6" cy="440.7" r="2.3" fill="#ee4fae" fill-opacity="0.85"/>
<circle cx="427.3" cy="448.4" r="2.3" fill="#ee3fa4" fill-opacity="0.85"/>
<circle cx="425.0" cy="446.9" r="2.8" fill="#3b78e7" fill-opacity="0.9"/>
<circle cx="268.4" cy="416.5" r="2.7" fill="#86bf6c" fill-opacity="0.9"/>
<circle cx="275.2" cy="418.9" r="2.7" fill="#f58a4b" fill-opacity="0.9"/>
<circle cx="281.2" cy="414.4" r="2.4" fill="#f07a82" fill-opacity="0.9"/>
<circle cx="275.2" cy="426.3" r="2.4" fill="#72b255" fill-opacity="0.9"/>
<circle cx="288.6" cy="416.8" r="2.4" fill="#f9a65a" fill-opacity="0.85"/>
<circle cx="292.2" cy="415.3" r="2.4" fill="#f9b275" fill-opacity="0.85"/>
<circle cx="261.6" cy="419.8" r="1.8" fill="#e8734f" fill-opacity="0.9"/>
<circle cx="352.5" cy="403.1" r="2.7" fill="#8ccb76" fill-opacity="0.9"/>
<circle cx="372.7" cy="416.5" r="2.4" fill="#f13fa7" fill-opacity="0.9"/>
<circle cx="312.4" cy="467.6" r="2.4" fill="#70c08a" fill-opacity="0.9"/>
</g>
</g>
</svg>
<div class="abs" style="left:428.500px;top:364.600px;width:21.200px;height:21.400px;background:#fff;border-radius:1px;box-shadow:0 0 1px rgba(0,0,0,.2)"></div>
<svg style="left:431.400px;top:367.600px" width="15.500" height="15.500" viewBox="0 0 24 24"><path fill="#666" d="M7 14H5v5h5v-2H7v-3zm-2-4h2V7h3V5H5v5zm12 7h-3v2h5v-5h-2v3zM14 5v2h3v3h2V5h-5z"/></svg>
<div class="abs" style="left:428.600px;top:426.900px;width:21px;height:20.600px;background:#fff;border-radius:1px;box-shadow:0 0 1px rgba(0,0,0,.2)"></div>
<svg style="left:434.300px;top:429px" width="9.500" height="16.500" viewBox="0 0 10 18"><circle cx="5" cy="2.600" r="2.300" fill="#f5a400"/><path d="M1.300,6.200 Q1.300,5 2.600,5 H7.400 Q8.700,5 8.700,6.200 V10.800 H7.600 V16.500 H5.400 V11.500 H4.600 V16.500 H2.400 V10.800 H1.300 Z" fill="#f5a400"/><path d="M3.300,5.200L5,8L6.700,5.200" stroke="#d98a00" stroke-width=".6" fill="none"/></svg>
<div class="abs" style="left:428.400px;top:464.700px;width:21.300px;height:42px;background:#fff;border-radius:1px;box-shadow:0 0 1px rgba(0,0,0,.2)"></div>
<svg style="left:0;top:0" width="1024" height="505"><path d="M434.300,475.600H443.900M439.100,470.800V480.400" stroke="#5a5a5a" stroke-width="1.900"/><path d="M431.500,486.500H446.500" stroke="#e6e6e6" stroke-width="1"/><path d="M434.300,497.500H443.900" stroke="#bdbdbd" stroke-width="1.900"/></svg>

<!-- ===== hidden properties panel (behind menu) ===== -->
<div class="hl" style="left:726px;top:84.500px;width:298px;background:#e3e5e8"></div>
<div class="abs" style="left:726px;top:103px;width:8px;height:2px;background:#4285f4"></div>
<div class="hl" style="left:726px;top:104.500px;width:127px;background:#e3e5e8"></div>
<div class="hl" style="left:726px;top:157.500px;width:127px;background:#e3e5e8"></div>
<div class="t" style="left:727px;top:114.500px;font-size:6.500px;color:#444">デ</div>
<div class="abs" style="left:729px;top:125px;width:60px;height:18.500px;border:1px solid #c9ccd1;border-radius:3px"></div>
<div class="abs" style="left:731.600px;top:66px;width:1.600px;height:8px;background:#333;transform:skewX(-10deg)"></div>
<!-- ===== data panel ===== -->
<svg style="left:860px;top:62.500px" width="11" height="13" viewBox="0 0 11 13"><g fill="none" stroke="#5f6368" stroke-width="1.400"><rect x=".7" y=".7" width="9.600" height="11.600"/><path d="M.7,4.500H10.300M.7,8.500H10.300"/></g></svg>
<div class="t" style="left:876px;top:65.800px;font-size:8.700px;font-weight:700;color:#202124">データ</div>
<div class="abs" style="left:855px;top:88px;width:123px;height:16.500px;background:#f1f3f4;border-radius:4px"></div>
<svg style="left:859.500px;top:92.500px" width="7.500" height="7.500" viewBox="0 0 24 24"><path fill="#5f6368" d="M15.500 14h-.79l-.28-.27C15.410 12.590 16 11.110 16 9.500 16 5.910 13.090 3 9.500 3S3 5.910 3 9.500 5.910 16 9.500 16c1.610 0 3.090-.59 4.230-1.570l.27.28v.79l5 4.990L20.490 19l-4.990-5zm-6 0C7.010 14 5 11.990 5 9.500S7.010 5 9.500 5 14 7.010 14 9.500 11.990 14 9.500 14z"/></svg>
<div class="t" style="left:871px;top:93.100px;font-size:6.400px;color:#5f6368">検索</div>
<div class="hl" style="left:853px;top:488.500px;width:129px"></div>
<svg style="left:857px;top:494.500px" width="9" height="9" viewBox="0 0 24 24"><path fill="#1a73e8" d="M12 2C6.480 2 2 6.480 2 12s4.480 10 10 10 10-4.480 10-10S17.520 2 12 2zm5 11h-4v4h-2v-4H7v-2h4V7h2v4h4v2z"/></svg>
<div class="t" style="left:872px;top:496px;font-size:5.900px;font-weight:700;color:#2b7de9">データを追加</div>
<!-- ===== side tabs ===== -->
<div class="tab" style="top:60px;background:#dfeafd"><span style="top:20.300px">データ</span></div>
<svg style="left:997.500px;top:65.800px" width="11" height="12" viewBox="0 0 11 12"><g fill="none" stroke="#1a73e8" stroke-width="1.300"><rect x=".7" y=".7" width="9.600" height="10.600" rx=".8"/><path d="M.7,4.200H10.300M.7,7.800H10.300"/></g></svg>
<div class="tab" style="top:98px"><span style="top:21.300px">プロパティ</span></div>
<svg style="left:997.300px;top:104px" width="11.500" height="11.500" viewBox="0 0 24 24"><path fill="#1a73e8" d="M14.060 9.020l.92.92L5.920 19H5v-.92l9.060-9.060M17.660 3c-.25 0-.51.1-.7.29l-1.830 1.830 3.750 3.750 1.830-1.830c.39-.39.39-1.020 0-1.410l-2.340-2.340c-.2-.2-.45-.29-.71-.29zm-3.600 3.190L3 17.250V21h3.750L17.810 9.940l-3.750-3.750z"/></svg>
<div class="tab" style="top:136.800px"><span style="top:18.400px">フィルタバ<br>ー</span></div>
<svg style="left:996.700px;top:140.200px" width="12.500" height="12.500" viewBox="0 0 24 24"><path fill="#1a73e8" d="M7 6h10l-5.010 6.300L7 6zm-2.750-.39C6.270 8.200 10 13 10 13v6c0 .55.45 1 1 1h2c.55 0 1-.45 1-1v-6s3.720-4.800 5.740-7.390c.51-.66.040-1.610-.79-1.610H5.040c-.83 0-1.300.95-.79 1.610z"/></svg>
<svg style="left:999px;top:486.500px" width="11" height="11" viewBox="0 0 24 24"><path fill="#444746" d="M10 6L8.590 7.410 13.170 12l-4.580 4.590L10 18l6-6z"/></svg>

<!-- ===== annotation text ===== -->
<div class="t" style="left:760px;top:269.300px;font-size:12.930px;line-height:24.400px;color:#ea3546;font-weight:300;text-spacing-trim:space-all;font-kerning:none;font-family:'Liberation Sans','Noto Sans CJK JP',sans-serif">データが変わったことを<br>確認出来たら、「共有」から<br>「レポートをダウンロード」を<br>クリックする。</div>

<!-- ===== share dropdown menu ===== -->
<div class="abs" style="left:733px;top:26.500px;width:128px;height:136px;background:#fff;border-radius:2px;box-shadow:0 1px 3px rgba(0,0,0,.3),0 2px 6px 1px rgba(0,0,0,.15)"></div>
<svg style="left:740.700px;top:37.500px" width="13" height="13" viewBox="0 0 24 24"><path fill="#5f6368" d="M13 8c0-2.210-1.790-4-4-4S5 5.790 5 8s1.790 4 4 4 4-1.790 4-4zm-2 0c0 1.100-.9 2-2 2s-2-.9-2-2 .9-2 2-2 2 .9 2 2zM1 18v2h16v-2c0-2.660-5.330-4-8-4s-8 1.340-8 4zm2 0c.2-.71 3.300-2 6-2 2.690 0 5.780 1.280 6 2H3zm17-3v-3h3v-2h-3V7h-2v3h-3v2h3v3h2z"/></svg>
<div class="t mi" style="top:40.700px">他のユーザーを招待</div>
<svg style="left:741.500px;top:63.300px" width="12.200" height="12.200" viewBox="0 0 24 24"><path fill="#5f6368" d="M11.990 2C6.470 2 2 6.480 2 12s4.470 10 9.990 10C17.520 22 22 17.520 22 12S17.520 2 11.990 2zM12 20c-4.420 0-8-3.580-8-8s3.580-8 8-8 8 3.580 8 8-3.580 8-8 8zm.5-13H11v6l5.250 3.150.75-1.230-4.500-2.670z"/></svg>
<div class="t mi" style="top:65.900px">配信のスケジュール</div>
<svg style="left:741px;top:89px" width="12.500" height="12.500" viewBox="0 0 24 24"><path fill="#5f6368" d="M3.900 12c0-1.710 1.390-3.100 3.100-3.100h4V7H7c-2.760 0-5 2.240-5 5s2.240 5 5 5h4v-1.900H7c-1.710 0-3.100-1.390-3.100-3.100zM8 13h8v-2H8v2zm9-6h-4v1.900h4c1.710 0 3.100 1.390 3.100 3.100s-1.390 3.100-3.100 3.100h-4V17h4c2.760 0 5-2.240 5-5s-2.240-5-5-5z"/></svg>
<div class="t mi" style="top:91.500px">レポートへのリンクを取得</div>
<svg style="left:741px;top:114px" width="13" height="13" viewBox="0 0 24 24"><path fill="#5f6368" d="M9.400 16.600L4.800 12l4.600-4.600L8 6l-6 6 6 6 1.400-1.400zm5.200 0l4.600-4.600-4.600-4.600L16 6l6 6-6 6-1.400-1.400z"/></svg>
<div class="t mi" style="top:117.900px">レポートを埋め込む</div>
<svg style="left:741.500px;top:140px" width="12.500" height="12.500" viewBox="0 0 24 24"><path fill="#5f6368" d="M18 15v3H6v-3H4v3c0 1.100.9 2 2 2h12c1.100 0 2-.9 2-2v-3h-2zm-1-4l-1.410-1.410L13 12.170V4h-2v8.170L8.410 9.590 7 11l5 5 5-5z"/></svg>
<div class="t mi" style="top:142.800px">レポートをダウンロード</div>

<!-- ===== red highlight boxes ===== -->
<svg style="left:0;top:0" width="1024" height="505"><g fill="none" stroke="#ee1c25"><rect x="806.200" y=".5" width="76.900" height="31.700" stroke-width="2.900"/><rect x="724.150" y="132.950" width="139" height="39.500" stroke-width="2.500"/></g></svg>

</body>
</html>
